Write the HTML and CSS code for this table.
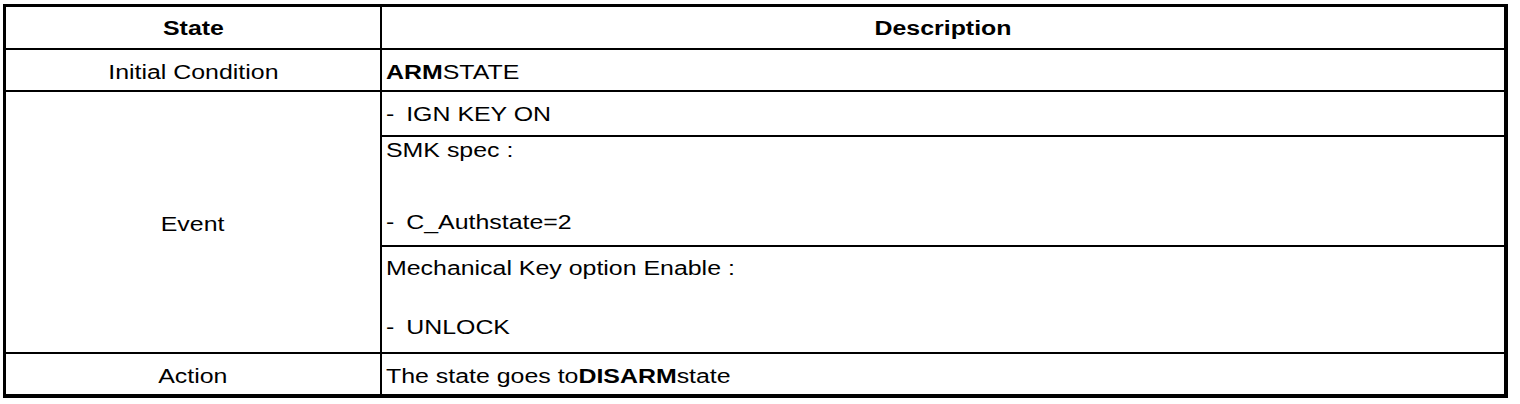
FILE: index.html
```html
<!DOCTYPE html>
<html lang="en">
<head>
<meta charset="utf-8">
<title>State table</title>
<link rel="stylesheet" href="styles.css">
</head>
<body>
<div class="table">
  <div class="cell head center"><span class="t">State</span></div>
  <div class="cell head center"><span class="t">Description</span></div>

  <div class="cell center low"><span class="t">Initial Condition</span></div>
  <div class="cell low"><span class="t"><b>ARM</b>STATE</span></div>

  <div class="cell center event"><span class="t">Event</span></div>
  <div class="cell"><span class="t"><span class="dash">-</span> IGN KEY ON</span></div>
  <div class="cell stack smk">
    <span class="t">SMK spec :</span>
    <span class="t"><span class="dash">-</span> C_Authstate=2</span>
  </div>
  <div class="cell stack mech">
    <span class="t">Mechanical Key option Enable :</span>
    <span class="t"><span class="dash">-</span> UNLOCK</span>
  </div>

  <div class="cell center low"><span class="t">Action</span></div>
  <div class="cell low"><span class="t">The state goes to<b>DISARM</b>state</span></div>
</div>
</body>
</html>
```

FILE: styles.css
```css
html, body {
  margin: 0;
  padding: 0;
  background: #fff;
}

body {
  font-family: "Liberation Sans", Arial, Helvetica, sans-serif;
  font-size: 20px;
  line-height: 22px;
  color: #000;
}

.table {
  display: grid;
  width: max-content;
  margin: 4px 0 0 3px;
  padding: 3px 4px 4px 3px;
  gap: 2px;
  background: #000;
  grid-template-columns: 374px 1122px;
  grid-template-rows: 41px 40px 43px 108px 105px 40px;
}

.cell {
  background: #fff;
  display: flex;
  align-items: center;
  padding: 0 4px;
  overflow: hidden;
  white-space: pre;
}

.cell.center {
  justify-content: center;
}

.head {
  font-weight: bold;
}

.low {
  padding-top: 3px;
}

.event {
  grid-row: 3 / span 3;
  grid-column: 1;
  padding-top: 4px;
}

.t {
  display: inline-block;
  transform: scaleX(1.245);
  transform-origin: left center;
}

.center .t {
  transform-origin: center center;
}

.dash {
  margin-right: 4px;
}

.stack {
  flex-direction: column;
  align-items: flex-start;
  justify-content: flex-start;
}

.smk {
  padding-top: 2px;
  gap: 50px;
}

.mech {
  padding-top: 10px;
  gap: 37px;
}
```
